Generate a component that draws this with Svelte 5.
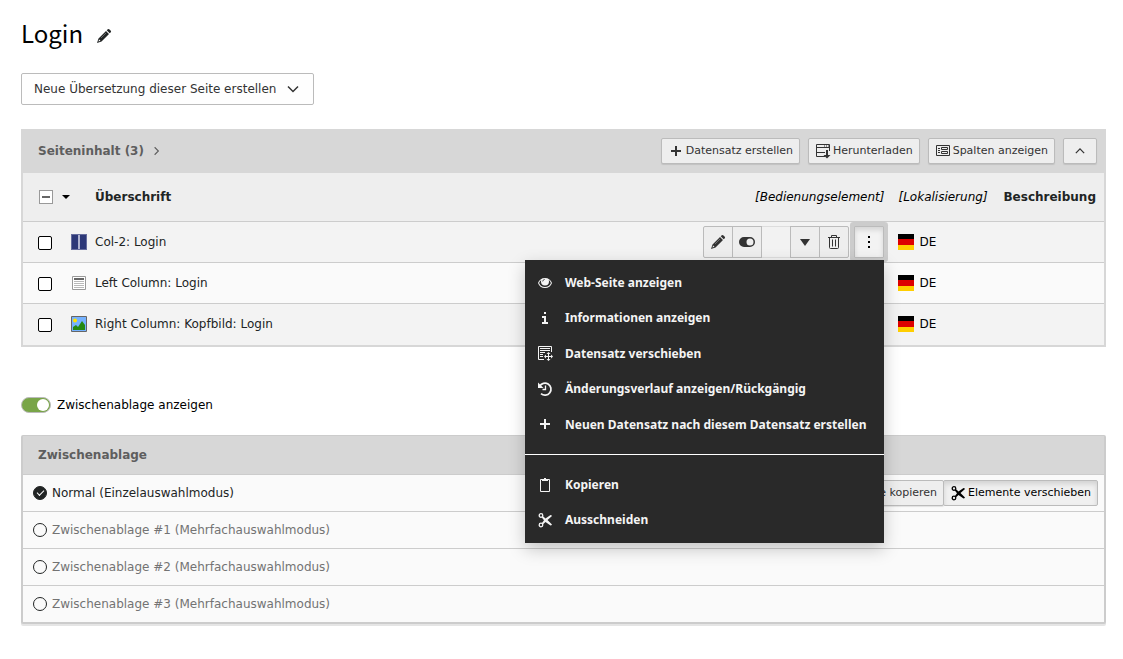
<script lang="ts">
	type MenuItem = { icon: string; label: string };

	const records = [
		{ icon: 'columns', title: 'Col-2: Login' },
		{ icon: 'text', title: 'Left Column: Login' },
		{ icon: 'image', title: 'Right Column: Kopfbild: Login' }
	];

	const recordActions: MenuItem[] = [
		{ icon: 'eye', label: 'Web-Seite anzeigen' },
		{ icon: 'info', label: 'Informationen anzeigen' },
		{ icon: 'move', label: 'Datensatz verschieben' },
		{ icon: 'history', label: 'Änderungsverlauf anzeigen/Rückgängig' },
		{ icon: 'plus', label: 'Neuen Datensatz nach diesem Datensatz erstellen' }
	];

	const clipboardActions: MenuItem[] = [
		{ icon: 'clipboard', label: 'Kopieren' },
		{ icon: 'scissors', label: 'Ausschneiden' }
	];

	const pads = [
		'Normal (Einzelauswahlmodus)',
		'Zwischenablage #1 (Mehrfachauswahlmodus)',
		'Zwischenablage #2 (Mehrfachauswahlmodus)',
		'Zwischenablage #3 (Mehrfachauswahlmodus)'
	];

	let menuOpen = $state(true);
	let showClipboard = $state(true);
	let activePad = $state(0);
</script>

{#snippet icon(name: string)}
	<svg class="icon" viewBox="0 0 16 16" aria-hidden="true">
		{#if name === 'pencil'}
			<path fill="currentColor" fill-rule="evenodd" d="M10 3 13 6 5.500 13.500 1 15l1.500-4.500zM3.200 11.500 2.400 13.600 4.500 12.800z" />
			<path fill="currentColor" d="m10.700 2.300 1.100-1.100q.7-.6 1.400 0l1.600 1.600q.6.7 0 1.400l-1.100 1.100z" />
			<path stroke="#fff" stroke-opacity=".5" stroke-width=".6" d="m5 10 5-5" />
		{:else if name === 'plus'}
			<path fill="currentColor" d="M7 3h2v4h4v2H9v4H7V9H3V7h4z" />
		{:else if name === 'download'}
			<path fill="none" stroke="currentColor" d="M10 13.500H1.500v-12h13V8M2 4.500h12M2 9.500h8" />
			<path fill="currentColor" d="M9 2.500h1v1H9zM11 2.500h1v1h-1zM13 2.500h1v1h-1zM11 7h2v5h2.500L12 15.500 8.500 12H11z" />
		{:else if name === 'list'}
			<path fill="none" stroke="currentColor" d="M1.500 2.500h13v10h-13z" />
			<path fill="currentColor" d="M3 5h2v1H3zM3 7h2v1H3zM3 9h2v1H3z" />
			<path fill="none" stroke="currentColor" d="M6.500 4.500h6v2h-6zM6.500 8.500h6v2h-6z" />
		{:else if name === 'toggle'}
			<path fill="currentColor" fill-rule="evenodd" d="M5 3h6a5 5 0 0 1 0 10H5A5 5 0 0 1 5 3zm6 1.500a3.500 3.500 0 1 0 0 7 3.500 3.500 0 0 0 0-7z" />
		{:else if name === 'down'}
			<path fill="currentColor" d="M3 5h10l-5 7z" />
		{:else if name === 'trash'}
			<path fill="none" stroke="currentColor" d="M2 3.500h12M5.500 3V1.500h5V3M3.500 4v9.500q0 1 1 1h7q1 0 1-1V4M6.500 5.500v7M9.500 5.500v7" />
		{:else if name === 'dots'}
			<path fill="currentColor" d="M7 2h2v2H7zM7 7h2v2H7zM7 12h2v2H7z" />
		{:else if name === 'eye'}
			<path fill="currentColor" fill-rule="evenodd" d="M8 3c3.500 0 6 2 7 5-1 3-3.500 5-7 5s-6-2-7-5c1-3 3.500-5 7-5zM4.300 4.900C3.300 5.600 2.500 6.700 2.100 8 3 10.400 5.100 12 8 12s5-1.600 5.900-4c-.4-1.300-1.200-2.400-2.200-3.100.2.500.3 1 .3 1.600a4 4 0 0 1-8 0c0-.6.1-1.100.3-1.600z" />
			<path fill="none" stroke="#292929" stroke-width=".8" d="M5.700 6.500Q5.800 4.600 7.700 4.400" />
		{:else if name === 'info'}
			<path fill="currentColor" d="M7 2h2v2H7zM5 6h4v6h2v2H5v-2h2V8H5z" />
		{:else if name === 'move'}
			<path fill="none" stroke="currentColor" d="M7 14.500H1.500v-13h13V7M3 5.500h10M3 7.500h5M3 9.500h3M3 11.500h3" />
			<path fill="currentColor" d="M3 3h10v1H3zM11 9h1v2h2V9.500l2 2-2 2V12h-2v2h1.500l-2 2-2-2H11v-2H9v1.500l-2-2 2-2V11h2V9H9.500l2-2 2 2z" />
		{:else if name === 'history'}
			<path fill="none" stroke="currentColor" stroke-width="1.700" d="M2.600 5.500A6 6 0 1 1 4 12.600" />
			<path fill="currentColor" d="M1 1.500V7h5.500z" />
			<path fill="none" stroke="currentColor" stroke-width="1.300" d="M8.500 4.500v4H5.500" />
		{:else if name === 'clipboard'}
			<path fill="none" stroke="currentColor" d="M5 2.500H3.500v12h9v-12H11" />
			<path fill="currentColor" d="M5 2h2V1h2v1h2v2H5z" />
		{:else if name === 'scissors'}
			<circle cx="4" cy="3.500" r="1.800" fill="none" stroke="currentColor" stroke-width="1.300" />
			<circle cx="4" cy="13" r="1.800" fill="none" stroke="currentColor" stroke-width="1.300" />
			<path fill="currentColor" d="m5.800 4 2.700 2.600L13.500 3q1 0 1.500 1l-4.500 4 4.500 4.500q-.5 1-1.500 1L8.500 10l-2.700 2.600-1.200-1.200L7 8.300 4.600 5.200z" />
		{:else if name === 'columns'}
			<path fill="#666d9e" d="M0 0h16v16H0z" />
			<path fill="#2d3878" d="M1 1h6v14H1zM9 1h6v14H9z" />
			<path fill="#aeb2d0" d="M7 1h2v14H7z" />
		{:else if name === 'text'}
			<path fill="#fff" stroke="#999" d="M1.500 1.500h13v13h-13z" />
			<path fill="#666" d="M3 3h10v2H3z" />
			<path fill="#b9b9b9" d="M3 6h10v1H3zM3 8h10v1H3zM3 10h10v1H3zM3 12h10v1H3z" />
		{:else if name === 'image'}
			<path fill="#75b2ff" stroke="#666" d="M.5.500h15v15H.5z" />
			<circle cx="4" cy="4.500" r="2" fill="#ffe300" />
			<path fill="#248a12" d="M2 14v-3l3-2 2 2 4-6 3 4v5z" />
		{:else if name === 'flag'}
			<path d="M0 0h16v5H0z" />
			<path fill="#d00" d="M0 5h16v6H0z" />
			<path fill="#ffce00" d="M0 11h16v5H0z" />
		{/if}
	</svg>
{/snippet}

{#snippet chevron(direction: string)}
	<svg class="chevron {direction}" viewBox="0 0 12 12" aria-hidden="true">
		<path fill="none" stroke="currentColor" stroke-width="1.500" d="m1 3.500 5 5 5-5" />
	</svg>
{/snippet}

{#snippet menuItem(item: MenuItem)}
	<li>
		<button type="button" class="menu-item" role="menuitem">
			{@render icon(item.icon)}
			{item.label}
		</button>
	</li>
{/snippet}

<main class="module">
	<header class="page-title">
		<h1>Login</h1>
		<button type="button" class="plain" aria-label="Seitentitel bearbeiten">{@render icon('pencil')}</button>
	</header>

	<button type="button" class="translate" aria-haspopup="listbox">
		Neue Übersetzung dieser Seite erstellen
		{@render chevron('down')}
	</button>

	<section class="recordlist">
		<div class="recordlist-heading">
			<a href="#seiteninhalt" class="heading-link">Seiteninhalt (3) {@render chevron('right')}</a>
			<div class="heading-actions">
				<button type="button" class="btn">{@render icon('plus')} Datensatz erstellen</button>
				<button type="button" class="btn">{@render icon('download')} Herunterladen</button>
				<button type="button" class="btn">{@render icon('list')} Spalten anzeigen</button>
				<button type="button" class="btn collapse" aria-label="Einklappen">{@render chevron('up')}</button>
			</div>
		</div>

		<table>
			<thead>
				<tr>
					<th class="col-check">
						<button type="button" class="plain select-all" aria-label="Auswahl">
							<span class="partial"></span>
							<span class="caret"></span>
						</button>
					</th>
					<th class="col-icon"></th>
					<th class="col-title">Überschrift</th>
					<th class="col-control"><i>[Bedienungselement]</i></th>
					<th class="col-local"><i>[Lokalisierung]</i></th>
					<th class="col-desc">Beschreibung</th>
				</tr>
			</thead>
			<tbody>
				{#each records as record, i}
					<tr>
						<td class="col-check"><input type="checkbox" class="check" aria-label={record.title} /></td>
						<td class="col-icon">{@render icon(record.icon)}</td>
						<td class="col-title"><a href="#bearbeiten">{record.title}</a></td>
						<td class="col-control">
							{#if i === 0}
								<div class="controls">
									<div class="btn-group">
										<button type="button" aria-label="Bearbeiten">{@render icon('pencil')}</button>
										<button type="button" aria-label="Verbergen">{@render icon('toggle')}</button>
										<span class="empty"></span>
										<button type="button" aria-label="Nach unten">{@render icon('down')}</button>
										<button type="button" aria-label="Löschen">{@render icon('trash')}</button>
									</div>
									<div class="dropdown">
										<button
											type="button"
											class="more"
											aria-label="Weitere Optionen"
											aria-expanded={menuOpen}
											onclick={() => (menuOpen = !menuOpen)}
										>
											{@render icon('dots')}
										</button>
										{#if menuOpen}
											<ul class="menu" role="menu">
												{#each recordActions as item}
													{@render menuItem(item)}
												{/each}
												<li class="divider" role="separator"></li>
												{#each clipboardActions as item}
													{@render menuItem(item)}
												{/each}
											</ul>
										{/if}
									</div>
								</div>
							{/if}
						</td>
						<td class="col-local"><span class="lang">{@render icon('flag')} DE</span></td>
						<td class="col-desc"></td>
					</tr>
				{/each}
			</tbody>
		</table>
	</section>

	<label class="switch">
		<input type="checkbox" bind:checked={showClipboard} />
		Zwischenablage anzeigen
	</label>

	{#if showClipboard}
		<section class="clipboard">
			<h2>Zwischenablage</h2>
			{#each pads as pad, i}
				<div class="pad">
					<label class:active={activePad === i}>
						<input type="radio" name="pad" value={i} bind:group={activePad} />
						{pad}
					</label>
					{#if i === 0}
						<div class="pad-actions">
							<button type="button" class="btn">{@render icon('clipboard')} Elemente kopieren</button>
							<button type="button" class="btn pressed">{@render icon('scissors')} Elemente verschieben</button>
						</div>
					{/if}
				</div>
			{/each}
		</section>
	{/if}
</main>

<style>
	:global(body) {
		margin: 0;
		background: #fff;
	}

	.module {
		padding: 16px 17px 32px 21px;
		font-family: Verdana, 'DejaVu Sans', sans-serif;
		font-size: 12px;
		line-height: 18px;
		color: #212424;
	}

	button,
	input {
		font: inherit;
		color: inherit;
		margin: 0;
	}

	a {
		color: inherit;
		text-decoration: none;
	}

	.icon {
		width: 16px;
		height: 16px;
		flex: none;
		display: block;
	}

	.chevron {
		width: 12px;
		height: 12px;
		flex: none;
	}

	.chevron.right {
		width: 9px;
		transform: rotate(-90deg);
	}

	.chevron.up {
		width: 10px;
		transform: rotate(180deg);
	}

	.plain {
		padding: 0;
		border: 0;
		background: none;
	}

	.page-title {
		display: flex;
		align-items: center;
		gap: 13px;
		height: 34px;
		margin-bottom: 23px;
	}

	h1 {
		margin: 0;
		font-family: 'Source Sans Pro', 'Noto Sans CJK SC', sans-serif;
		font-size: 24px;
		font-weight: 400;
		line-height: 34px;
		color: #000;
	}

	.page-title .plain {
		padding-top: 6px;
	}

	.translate {
		display: flex;
		align-items: center;
		gap: 11px;
		height: 32px;
		padding: 0 14px 0 12px;
		border: 1px solid #bbb;
		border-radius: 2px;
		background: #fefefe;
		color: #333;
	}

	.recordlist {
		margin-top: 24px;
		border: 2px solid #d7d7d7;
		border-top: 0;
	}

	.recordlist-heading {
		display: flex;
		align-items: center;
		justify-content: space-between;
		height: 44px;
		padding: 0 7px 0 15px;
		background: #d7d7d7;
	}

	.heading-link {
		display: flex;
		align-items: center;
		gap: 8px;
		font-weight: 700;
		color: #5e5e5e;
	}

	.heading-actions {
		display: flex;
		gap: 8px;
	}

	.btn {
		display: flex;
		align-items: center;
		gap: 2px;
		height: 26px;
		padding: 0 6px;
		border: 1px solid #bbb;
		border-radius: 2px;
		background: #eee;
		box-shadow: 0 1px 1px rgba(0, 0, 0, 0.1);
		font-size: 11px;
		color: #333;
		white-space: nowrap;
	}

	.btn.collapse {
		padding: 0 11px;
	}

	table {
		width: 100%;
		border-collapse: collapse;
	}

	th,
	td {
		padding: 0 7px;
		text-align: left;
		white-space: nowrap;
	}

	th {
		height: 48px;
		background: #eee;
		color: #212424;
	}

	th i {
		font-weight: 400;
		color: #000;
	}

	tbody tr {
		height: 41px;
		background: #fafafa;
	}

	tbody td {
		box-sizing: border-box;
		height: 41px;
		border-top: 1px solid #ccc;
	}

	tbody tr:nth-child(odd) {
		background: #f3f3f3;
	}

	.col-check {
		width: 33px;
		padding: 0 0 0 15px;
	}

	.col-icon {
		width: 16px;
		padding: 0 8px 0 0;
	}

	.col-title {
		padding-left: 0;
	}

	.col-control {
		width: 130px;
		text-align: right;
	}

	.col-local {
		width: 91px;
	}

	.col-desc {
		width: 91px;
		padding-right: 8px;
	}

	.select-all {
		display: flex;
		align-items: center;
		gap: 9px;
		padding-left: 1px;
	}

	.partial {
		display: flex;
		align-items: center;
		justify-content: center;
		box-sizing: border-box;
		width: 14px;
		height: 14px;
		border: 1px solid #999;
		background: #fff;
	}

	.partial::before {
		content: '';
		width: 8px;
		height: 2px;
		background: #666;
	}

	.caret {
		border: 4px solid transparent;
		border-top-color: #000;
		border-bottom: 0;
	}

	.check {
		appearance: none;
		display: block;
		box-sizing: border-box;
		width: 14px;
		height: 14px;
		margin-top: 2px;
		border: 1px solid #000;
		border-radius: 2px;
		background: #fff;
	}

	.check:checked {
		background: #333;
	}

	.controls {
		display: flex;
		justify-content: flex-end;
		gap: 5px;
	}

	.btn-group {
		display: flex;
	}

	.btn-group button,
	.btn-group .empty,
	.more {
		display: flex;
		align-items: center;
		justify-content: center;
		box-sizing: border-box;
		width: 30px;
		height: 32px;
		padding: 0;
		border: 1px solid #bbb;
		background: #eee;
		color: #333;
	}

	.btn-group > * + * {
		margin-left: -1px;
	}

	.btn-group button:first-child {
		border-radius: 2px 0 0 2px;
	}

	.btn-group button:last-child {
		border-radius: 0 2px 2px 0;
	}

	.btn-group .empty {
		border-color: #ddd;
		border-width: 1px 0;
		width: 28px;
		margin: 0;
		background: #f2f2f2;
	}

	.btn-group .empty + button {
		margin: 0;
	}

	.btn-group .icon,
	.more .icon {
		width: 16px;
		height: 16px;
	}

	.dropdown {
		position: relative;
	}

	.more {
		border-color: #bbb;
		border-radius: 1px;
		background: #f3f3f3;
		box-shadow: inset 0 3px 5px rgba(0, 0, 0, 0.125), 0 0 0 4px #ccc;
		color: #000;
	}

	.menu {
		position: absolute;
		z-index: 10;
		top: calc(100% + 2px);
		right: 0;
		margin: 0;
		padding: 5px 0;
		list-style: none;
		background: #292929;
		box-shadow: 0 6px 16px rgba(0, 0, 0, 0.22);
	}

	.menu-item {
		display: flex;
		align-items: center;
		gap: 12px;
		width: 100%;
		padding: 9px 18px 9px 12px;
		border: 0;
		background: none;
		font-family: 'Noto Sans', sans-serif;
		font-size: 12px;
		font-weight: 700;
		line-height: 1.45;
		color: #f4f4f4;
		text-align: left;
		white-space: nowrap;
	}

	.divider {
		height: 1px;
		margin: 12px 0;
		background: #fff;
	}

	.lang {
		display: flex;
		align-items: center;
		gap: 5px;
		color: #000;
	}

	.switch {
		display: flex;
		align-items: center;
		gap: 6px;
		width: fit-content;
		margin-top: 49px;
		color: #000;
	}

	.switch input {
		appearance: none;
		display: flex;
		align-items: center;
		box-sizing: border-box;
		width: 30px;
		height: 16px;
		padding: 0 1px;
		border: 1px solid #bbb;
		border-radius: 8px;
		background: #ccc;
	}

	.switch input::before {
		content: '';
		width: 12px;
		height: 12px;
		border-radius: 50%;
		background: #fff;
	}

	.switch input:checked {
		justify-content: flex-end;
		background: #79a548;
	}

	.clipboard {
		margin-top: 21px;
		border: 1px solid #ccc;
		border-right-width: 2px;
		border-bottom-width: 2px;
		border-left-width: 2px;
		border-radius: 2px;
		background: #fafafa;
		box-shadow: 0 2px 0 #e5e5e5;
	}

	h2 {
		margin: 0;
		padding: 10px 15px;
		background: #d7d7d7;
		font-size: 12px;
		font-weight: 700;
		line-height: 18px;
		color: #5e5e5e;
	}

	.pad {
		display: flex;
		align-items: center;
		justify-content: space-between;
		height: 36px;
		padding: 0 6px 0 10px;
		border-top: 1px solid #ccc;
	}

	.pad label {
		display: flex;
		align-items: center;
		gap: 5px;
		color: #737373;
	}

	.pad label.active {
		color: #212424;
	}

	.pad input {
		appearance: none;
		display: grid;
		place-items: center;
		box-sizing: border-box;
		width: 14px;
		height: 14px;
		border: 1px solid #212424;
		border-radius: 50%;
	}

	.pad input:checked {
		background: #212424;
	}

	.pad input:checked::before {
		content: '';
		width: 6px;
		height: 3px;
		margin-bottom: 2px;
		border: solid #fff;
		border-width: 0 0 1px 1px;
		transform: rotate(-45deg);
	}

	.pad-actions {
		display: flex;
	}

	.pad-actions .btn + .btn {
		margin-left: -1px;
	}

	.pressed {
		background: #f0f0f0;
		box-shadow: inset 0 3px 5px rgba(0, 0, 0, 0.125);
		color: #000;
	}
</style>
